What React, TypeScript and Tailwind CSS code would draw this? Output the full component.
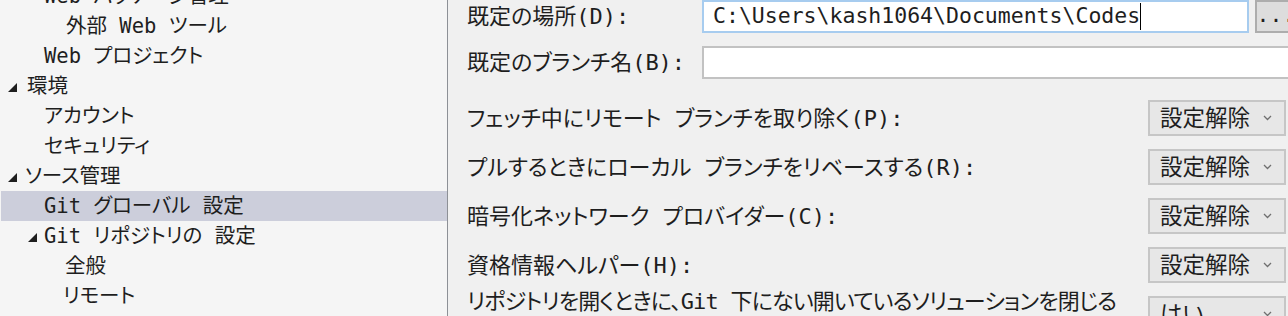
import React from "react";

const mono = "font-['DejaVu_Sans_Mono','Noto_Sans_CJK_JP',monospace] [font-feature-settings:'palt']";

type TreeRow = { label: string; indent: number; expander?: number; selected?: boolean };

const treeRows: TreeRow[] = [
  { label: "Web パッケージ管理", indent: 44 },
  { label: "外部 Web ツール", indent: 66 },
  { label: "Web プロジェクト", indent: 44 },
  { label: "環境", indent: 27, expander: 8 },
  { label: "アカウント", indent: 44 },
  { label: "セキュリティ", indent: 44 },
  { label: "ソース管理", indent: 25, expander: 8 },
  { label: "Git グローバル 設定", indent: 44, selected: true },
  { label: "Git リポジトリの 設定", indent: 44, expander: 28 },
  { label: "全般", indent: 65 },
  { label: "リモート", indent: 63 },
];

const Expanded = () => (
  <svg width="9" height="9" viewBox="0 0 9 9" className="block">
    <polygon points="9,0 9,9 0,9" fill="#1e1e1e" />
  </svg>
);

const Chevron = () => (
  <svg width="9" height="6" viewBox="0 0 9 6" className="block">
    <polyline points="1,1 4.5,4.5 8,1" fill="none" stroke="#6f6f6f" strokeWidth="1.3" />
  </svg>
);

const Dropdown = ({ value }: { value: string }) => (
  <div className="w-[138px] h-[36px] shrink-0 flex items-center justify-between pl-[10px] pr-[12px] bg-[#e7e7e7] border-2 border-[#c6c6c6]">
    <span className="text-[22.5px] leading-none">{value}</span>
    <Chevron />
  </div>
);

const settingRows = [
  { label: "フェッチ中にリモート ブランチを取り除く(P):", value: "設定解除" },
  { label: "プルするときにローカル ブランチをリベースする(R):", value: "設定解除" },
  { label: "暗号化ネットワーク プロバイダー(C):", value: "設定解除" },
  { label: "資格情報ヘルパー(H):", value: "設定解除" },
];

export default function App() {
  return (
    <div className={`w-[1288px] h-[316px] overflow-hidden flex text-[#1e1e1e] ${mono}`}>
      <aside className="w-[448px] shrink-0 bg-[#f5f5f5] border-r border-[#8d9096] overflow-hidden">
        <div className="mt-[-19px] flex flex-col text-[20.5px]">
          {treeRows.map((row) => (
            <div
              key={row.label}
              className={`relative h-[30px] flex items-center whitespace-nowrap ${row.selected ? "bg-[#cccedb] ml-px" : ""}`}
              style={{ paddingLeft: row.selected ? row.indent - 1 : row.indent }}
            >
              {row.expander !== undefined && (
                <span className="absolute top-[12px]" style={{ left: row.expander }}>
                  <Expanded />
                </span>
              )}
              {row.label}
            </div>
          ))}
        </div>
      </aside>

      <main className="flex-1 bg-[#f0f0f0] pl-[19px] overflow-hidden">
        <div className="flex items-center h-[33px]">
          <label className="w-[235px] shrink-0 text-[22px] whitespace-nowrap">既定の場所(D):</label>
          <div className="w-[547px] h-[33px] shrink-0 bg-white border-2 border-[#a7ccef] flex items-center pl-[9px] text-[21.5px] whitespace-nowrap">
            C:\Users\kash1064\Documents\Codes
            <span className="inline-block w-px h-[27px] bg-black" />
          </div>
          <button className="ml-[6px] w-[42px] h-[33px] shrink-0 bg-[#dddddd] border-2 border-[#adadad] flex items-center justify-center text-[21.5px] leading-none pb-[4px]">
            ...
          </button>
        </div>

        <div className="flex items-center h-[33px] mt-[13px]">
          <label className="w-[235px] shrink-0 text-[22px] whitespace-nowrap">既定のブランチ名(B):</label>
          <div className="w-[600px] h-[33px] shrink-0 bg-white border-2 border-[#c2c2c2]" />
        </div>

        <div className="flex flex-col gap-[13px] mt-[21px] pr-[2px]">
          {settingRows.map((row) => (
            <div key={row.label} className="flex items-center justify-between">
              <span className="text-[22px] whitespace-nowrap">{row.label}</span>
              <Dropdown value={row.value} />
            </div>
          ))}
          <div className="flex items-start justify-between gap-[4px]">
            <span className="min-w-0 text-[22px] leading-[30px] -mt-[9px] whitespace-nowrap tracking-[-0.8px]">
              リポジトリを開くときに、Git 下にない開いているソリューションを閉じる
            </span>
            <Dropdown value="はい" />
          </div>
        </div>
      </main>
    </div>
  );
}
